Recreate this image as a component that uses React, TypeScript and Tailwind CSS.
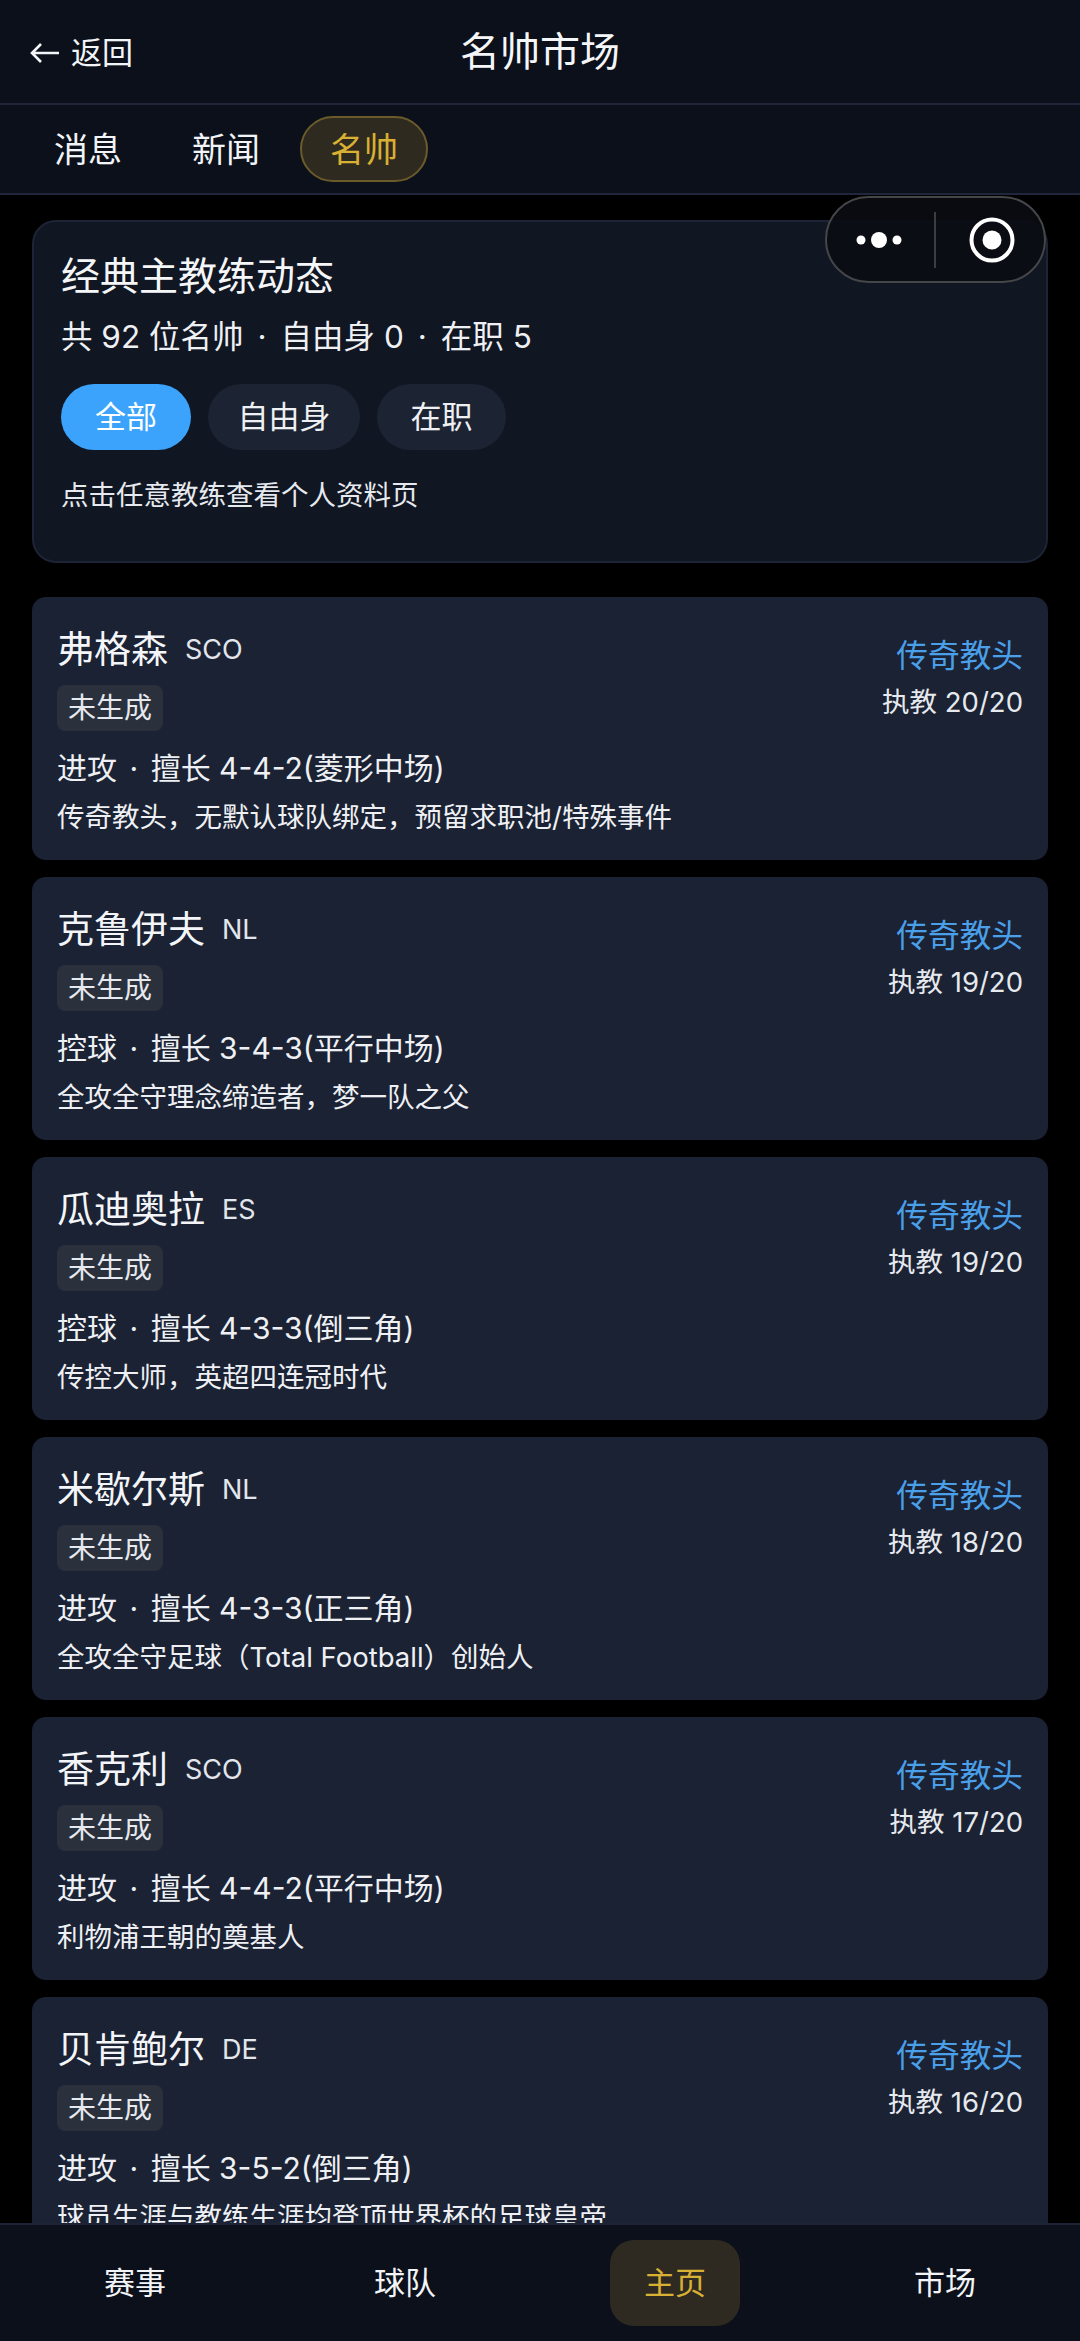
const FONT = 'font-["Inter","Noto_Sans_CJK_SC",sans-serif]';

const COACHES = [
  { name: '弗格森', nation: 'SCO', record: '执教 20/20', tactic: '进攻', skill: '擅长 4-4-2(菱形中场)', note: '传奇教头，无默认球队绑定，预留求职池/特殊事件' },
  { name: '克鲁伊夫', nation: 'NL', record: '执教 19/20', tactic: '控球', skill: '擅长 3-4-3(平行中场)', note: '全攻全守理念缔造者，梦一队之父' },
  { name: '瓜迪奥拉', nation: 'ES', record: '执教 19/20', tactic: '控球', skill: '擅长 4-3-3(倒三角)', note: '传控大师，英超四连冠时代' },
  { name: '米歇尔斯', nation: 'NL', record: '执教 18/20', tactic: '进攻', skill: '擅长 4-3-3(正三角)', note: '全攻全守足球（Total Football）创始人' },
  { name: '香克利', nation: 'SCO', record: '执教 17/20', tactic: '进攻', skill: '擅长 4-4-2(平行中场)', note: '利物浦王朝的奠基人' },
  { name: '贝肯鲍尔', nation: 'DE', record: '执教 16/20', tactic: '进攻', skill: '擅长 3-5-2(倒三角)', note: '球员生涯与教练生涯均登顶世界杯的足球皇帝' },
];

function Dot({ className }: { className: string }) {
  return <span className={className}>·</span>;
}

function CoachCard({ coach }: { coach: (typeof COACHES)[number] }) {
  return (
    <div className="bg-[#1a2233] rounded-[14px] h-[263px] px-[25px] pt-[27px] flex justify-between shrink-0">
      <div>
        <div className="flex items-center gap-[17px]">
          <span className="text-[37px] leading-[52px] text-[#f3f5f8]">{coach.name}</span>
          <span className="text-[27px] text-[#e2e6ec]">{coach.nation}</span>
        </div>
        <div className="mt-[9px] w-fit h-[46px] px-[11px] rounded-[8px] bg-[#2a303c] flex items-center text-[28px] text-[#e6e9ee]">未生成</div>
        <div className="mt-[16px] text-[30px] leading-[42px] text-[#eef0f4]">
          {coach.tactic}
          <Dot className="mx-[12.5px]" />
          {coach.skill}
        </div>
        <div className="mt-[8px] text-[27.5px] leading-[40px] text-[#eef0f4]">{coach.note}</div>
      </div>
      <div className="flex flex-col items-end pt-[9px]">
        <span className="text-[31.7px] leading-[46px] text-[#4a9fe8]">传奇教头</span>
        <span className="mt-[2px] text-[27.5px] leading-[42px] text-[#e6e9ee]">{coach.record}</span>
      </div>
    </div>
  );
}

export default function App() {
  return (
    <div className={`relative w-[1080px] h-[2341px] overflow-hidden bg-black flex flex-col ${FONT}`}>
      <header className="relative h-[105px] shrink-0 bg-[#0b101b] border-b-2 border-[#20263b] flex items-center justify-center">
        <div className="absolute left-[30px] top-[31px] flex items-center gap-[11px] text-[31px] leading-[44px] text-[#f2f4f7]">
          <svg width="30" height="22" viewBox="0 0 30 22" fill="none" stroke="#f2f4f7" strokeWidth="2.6">
            <path d="M29 11H2M11 2 2 11l9 9" />
          </svg>
          <span>返回</span>
        </div>
        <h1 className="text-[40px] font-normal text-[#f5f6f8]">名帅市场</h1>
      </header>

      <nav className="h-[90px] shrink-0 bg-[#0b101b] border-b-2 border-[#20263b] flex items-center pl-[32px]">
        <span className="w-[112px] text-center text-[34px] text-[#f2f4f7]">消息</span>
        <span className="ml-[26px] w-[112px] text-center text-[34px] text-[#f2f4f7]">新闻</span>
        <span className="ml-[18px] w-[128px] h-[66px] rounded-full border-2 border-[#6b5a2a] bg-[#2f2a1f] flex items-center justify-center text-[34px] text-[#d8b034]">名帅</span>
      </nav>

      <main className="flex-1 min-h-0 overflow-hidden px-[32px] pt-[25px] flex flex-col gap-[17px]">
        <section className="h-[343px] shrink-0 mb-[17px] rounded-[24px] border-2 border-[#1d2436] bg-[#101622] pl-[27px] pr-[28px] pt-[27px]">
          <h2 className="text-[39px] leading-[54px] font-normal text-[#f5f6f8]">经典主教练动态</h2>
          <p className="mt-[12px] text-[31.5px] leading-[44px] text-[#eef0f4]">
            共 92 位名帅
            <Dot className="mx-[14px]" />
            自由身 0
            <Dot className="mx-[14px]" />
            在职 5
          </p>
          <div className="mt-[25px] flex gap-[17px]">
            <span className="w-[130px] h-[66px] rounded-full bg-[#3ba3fb] flex items-center justify-center text-[31px] text-white">全部</span>
            <span className="w-[152px] h-[66px] rounded-full bg-[#1c2332] flex items-center justify-center text-[31px] text-[#eef0f4]">自由身</span>
            <span className="w-[129px] h-[66px] rounded-full bg-[#1c2332] flex items-center justify-center text-[31px] text-[#eef0f4]">在职</span>
          </div>
          <p className="mt-[25px] text-[27.5px] leading-[40px] text-[#e6e9ee]">点击任意教练查看个人资料页</p>
        </section>
        {COACHES.map(coach => (
          <CoachCard key={coach.name} coach={coach} />
        ))}
      </main>

      <footer className="absolute left-0 right-0 bottom-0 h-[118px] bg-[#0b101b] border-t-2 border-[#1d2436] grid grid-cols-4">
        <div className="flex items-center justify-center text-[31px] text-[#f2f4f7]">赛事</div>
        <div className="flex items-center justify-center text-[31px] text-[#f2f4f7]">球队</div>
        <div className="flex items-center justify-center">
          <span className="w-[130px] h-[86px] rounded-[24px] bg-[#2e2a22] flex items-center justify-center text-[31px] text-[#d8b034]">主页</span>
        </div>
        <div className="flex items-center justify-center text-[31px] text-[#f2f4f7]">市场</div>
      </footer>

      <div className="absolute left-[825px] top-[196px] w-[221px] h-[87px] rounded-full border-2 border-[#454648] bg-[#0a0c12]/90 flex items-center">
        <svg className="ml-[29px]" width="46" height="18" viewBox="0 0 46 18" fill="#fff">
          <circle cx="5" cy="9" r="4.5" />
          <circle cx="23" cy="9" r="8" />
          <circle cx="41" cy="9" r="4.5" />
        </svg>
        <span className="ml-[32px] w-[2px] h-[56px] bg-[#3c3d40]" />
        <svg className="ml-[33px]" width="46" height="46" viewBox="0 0 46 46" fill="none">
          <circle cx="23" cy="23" r="20.5" stroke="#fff" strokeWidth="4" />
          <circle cx="23" cy="23" r="9.5" fill="#fff" />
        </svg>
      </div>
    </div>
  );
}
